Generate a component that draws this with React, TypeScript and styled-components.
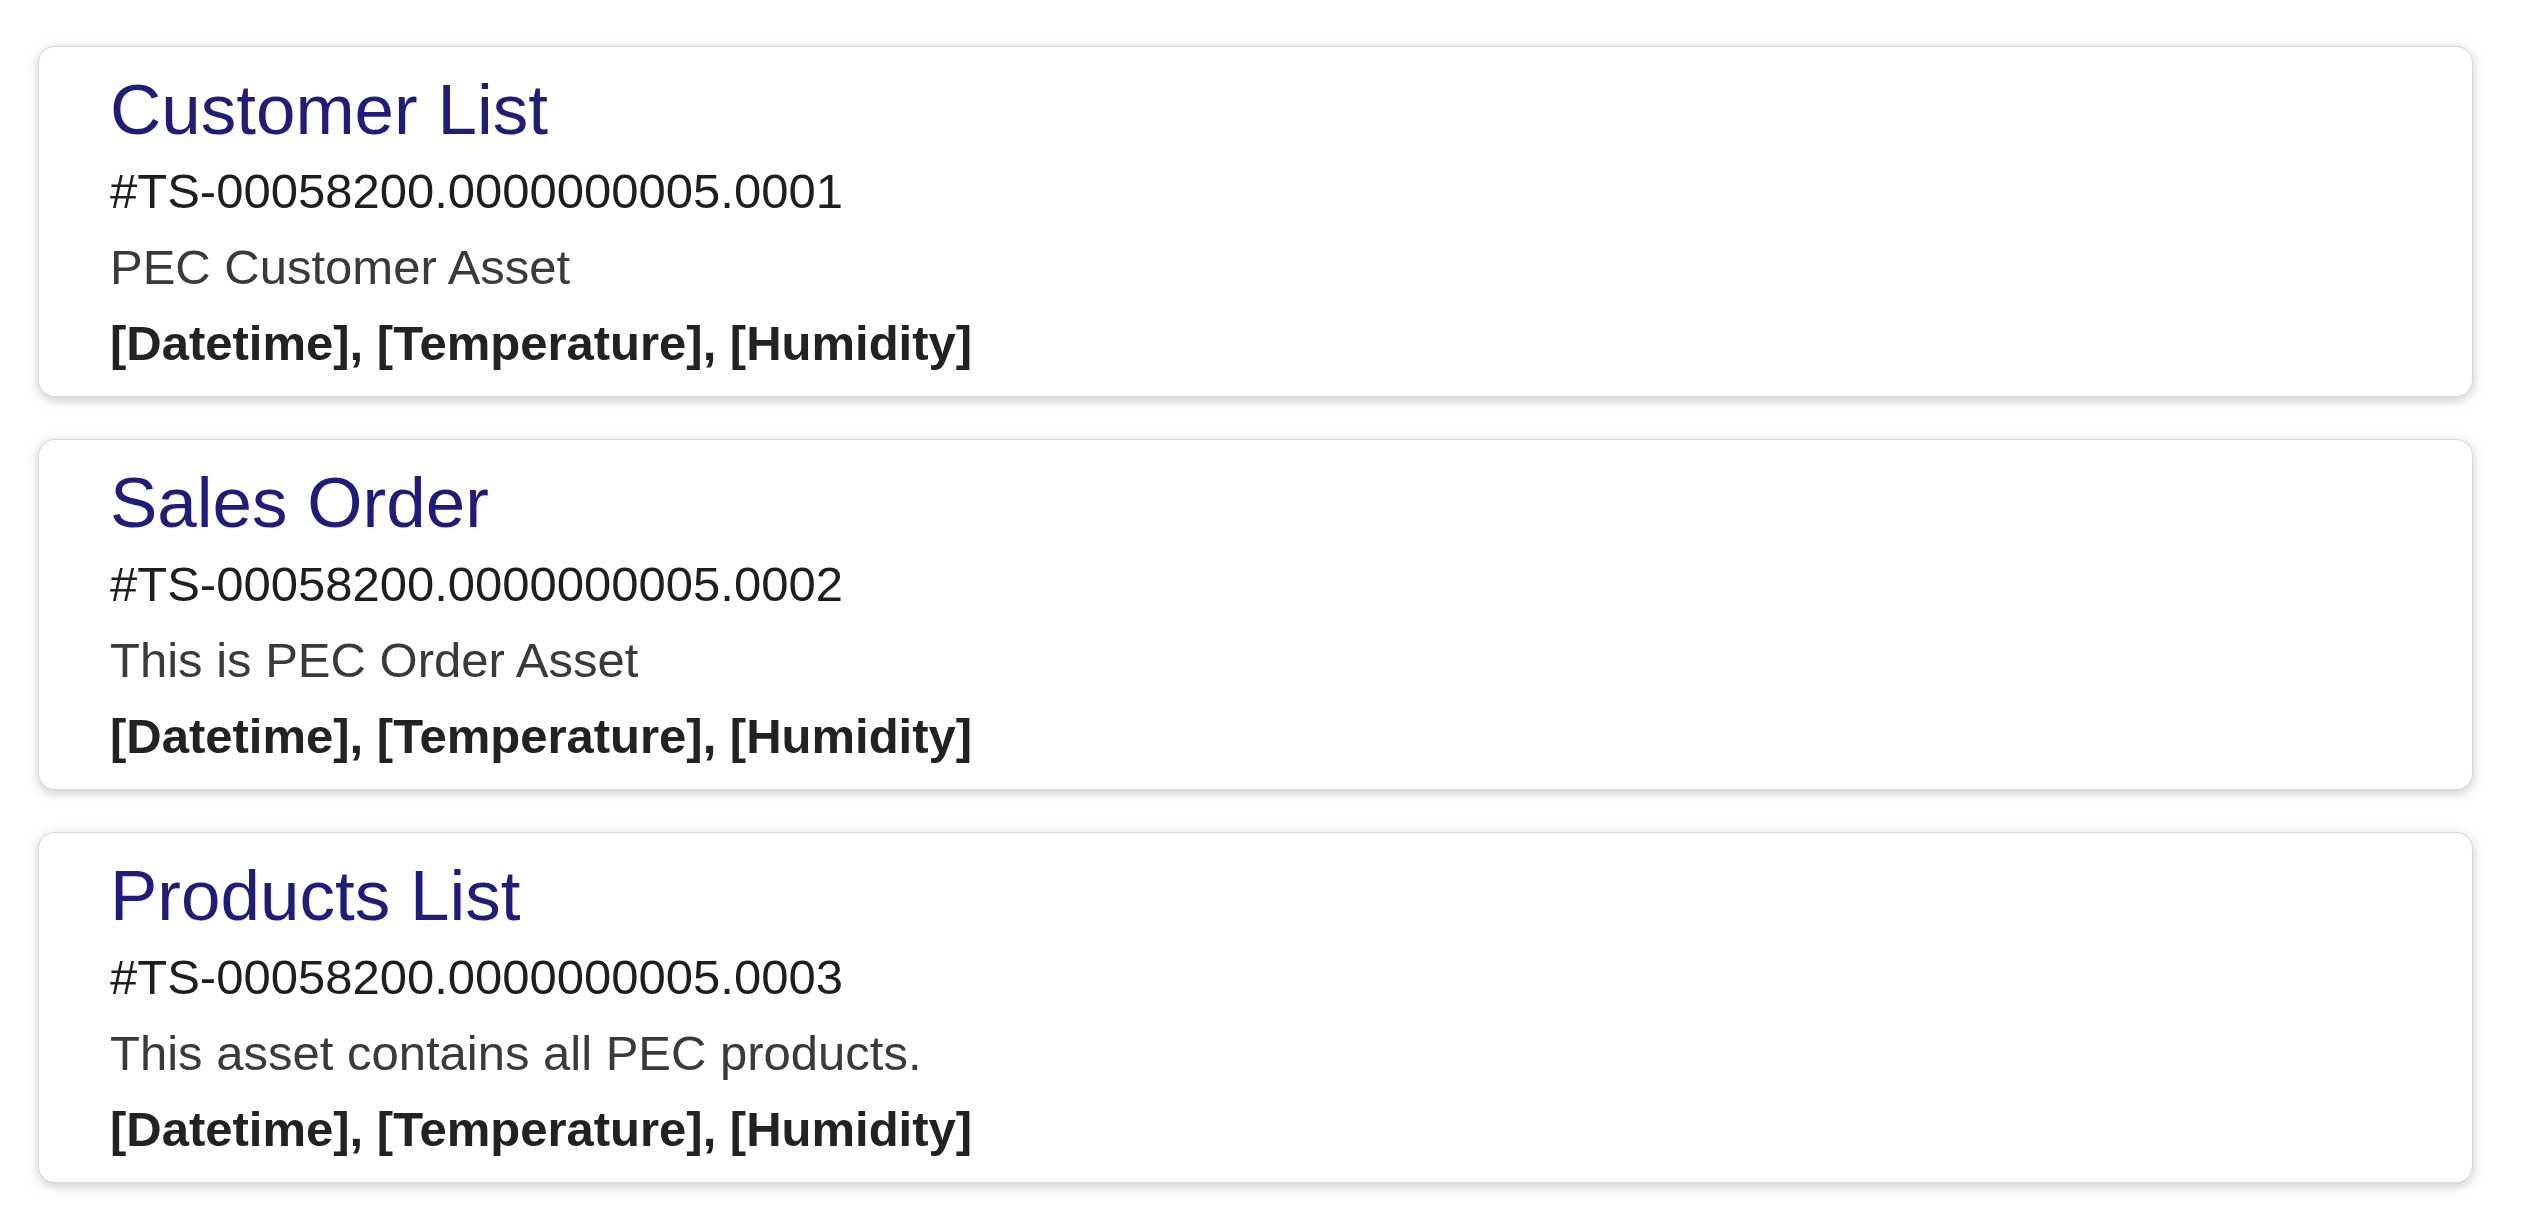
import React from "react";
import styled, { createGlobalStyle } from "styled-components";

const GlobalStyle = createGlobalStyle`
  html, body {
    margin: 0;
    padding: 0;
    background: #ffffff;
  }
  body {
    font-family: "Liberation Sans", Arial, sans-serif;
  }
`;

const Page = styled.main`
  display: flex;
  flex-direction: column;
  gap: 42px;
  padding: 46px 52px 40px 38px;
`;

const Card = styled.section`
  display: flex;
  flex-direction: column;
  background: #ffffff;
  border: 1px solid #d6d6d6;
  border-radius: 17px;
  box-shadow: 0 3px 12px rgba(0, 0, 0, 0.22);
  padding: 20px 24px 17px 71px;
  height: 351px;
  box-sizing: border-box;
`;

const Title = styled.h2`
  margin: 0;
  font-family: "Liberation Sans", Arial, sans-serif;
  font-weight: 400;
  font-size: 71px;
  line-height: 86px;
  color: #1f1c7c;
`;

const Line = styled.div<{ $bold?: boolean; $tone?: string }>`
  font-family: "Liberation Sans", Arial, sans-serif;
  font-size: 49px;
  line-height: 76px;
  font-weight: ${(p) => (p.$bold ? 700 : 400)};
  color: ${(p) => p.$tone || "#222222"};
`;

type Asset = {
  title: string;
  id: string;
  description: string;
  fields: string[];
};

const assets: Asset[] = [
  {
    title: "Customer List",
    id: "#TS-00058200.0000000005.0001",
    description: "PEC Customer Asset",
    fields: ["Datetime", "Temperature", "Humidity"],
  },
  {
    title: "Sales Order",
    id: "#TS-00058200.0000000005.0002",
    description: "This is PEC Order Asset",
    fields: ["Datetime", "Temperature", "Humidity"],
  },
  {
    title: "Products List",
    id: "#TS-00058200.0000000005.0003",
    description: "This asset contains all PEC products.",
    fields: ["Datetime", "Temperature", "Humidity"],
  },
];

export default function App() {
  return (
    <>
      <GlobalStyle />
      <Page>
        {assets.map((a) => (
          <Card key={a.id}>
            <Title>{a.title}</Title>
            <Line $tone="#1e1e1e">{a.id}</Line>
            <Line $tone="#3a3a3a">{a.description}</Line>
            <Line $bold $tone="#222222">
              {a.fields.map((f) => `[${f}]`).join(", ")}
            </Line>
          </Card>
        ))}
      </Page>
    </>
  );
}
